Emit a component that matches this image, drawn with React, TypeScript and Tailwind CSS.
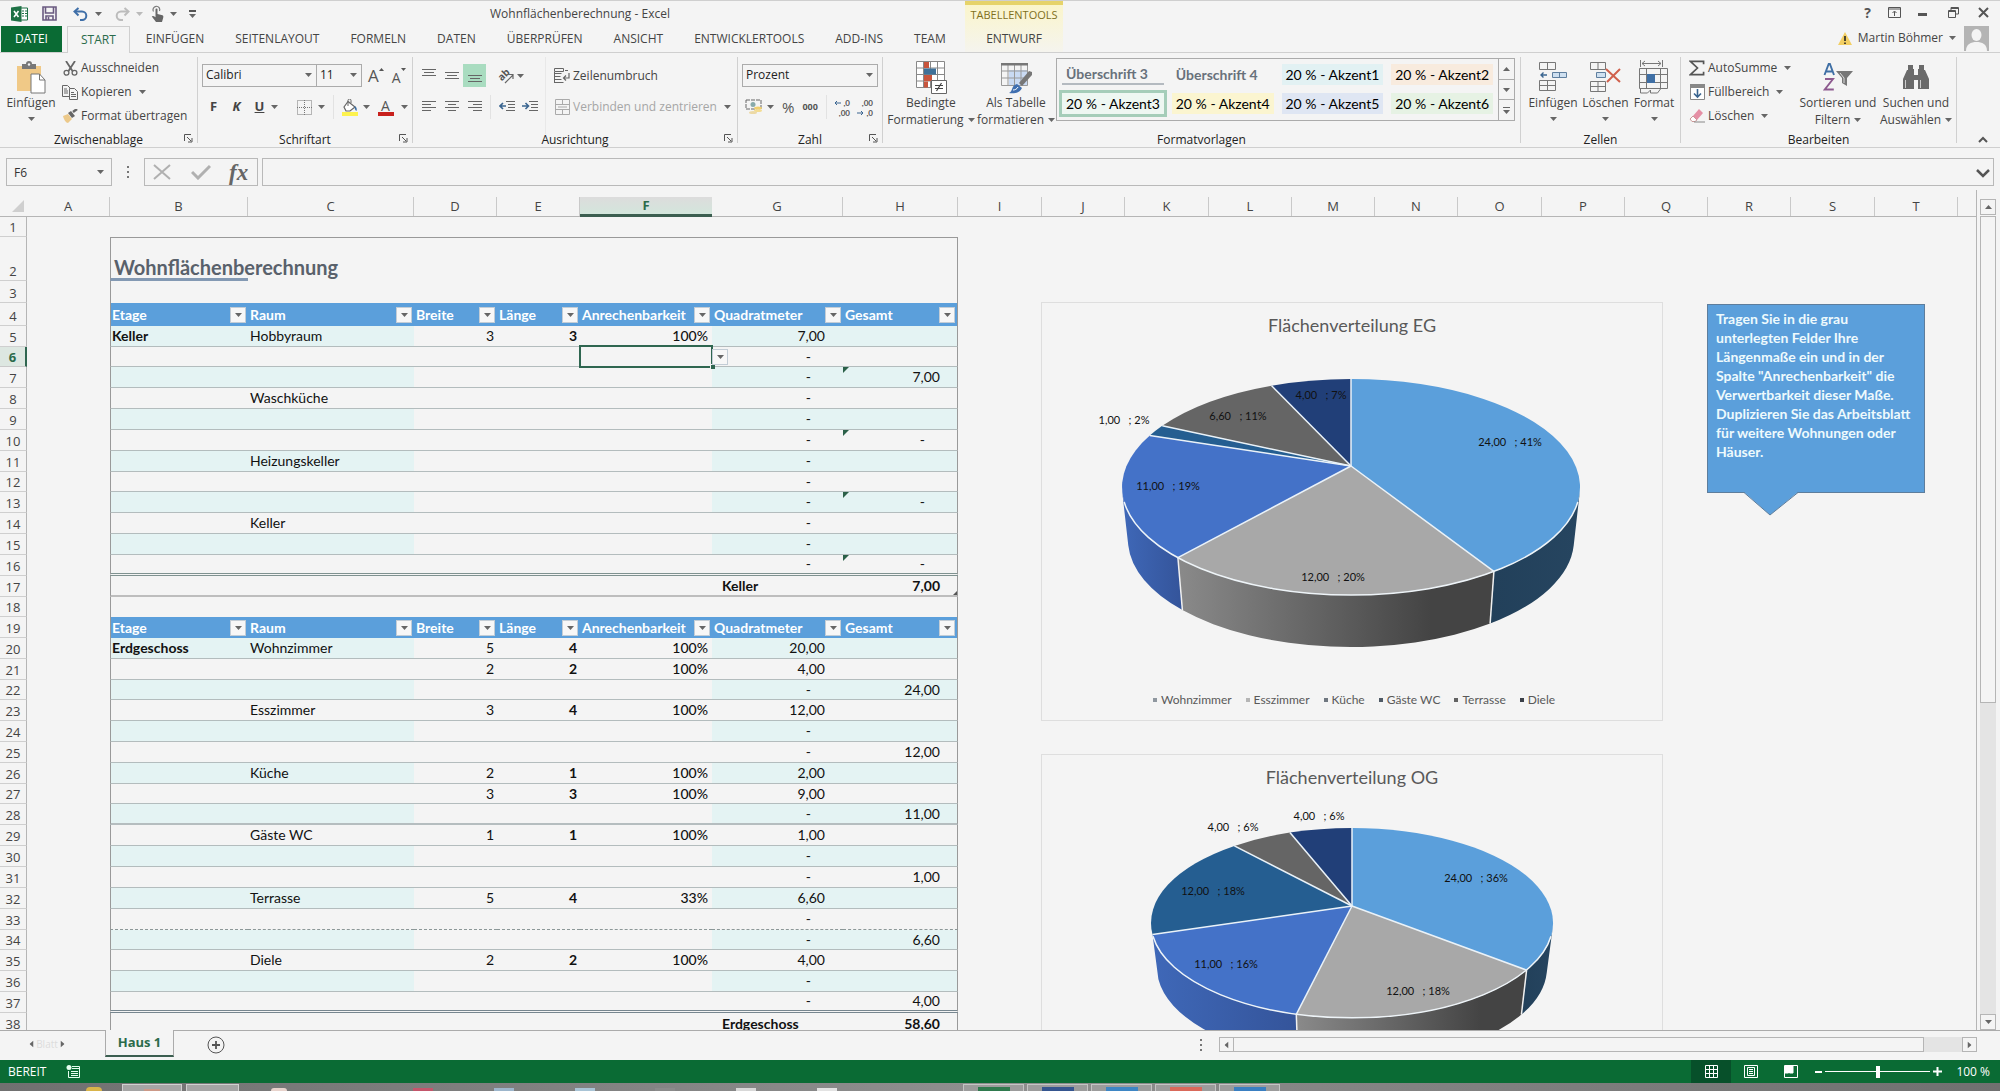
import React from "react";
import type { ReactNode } from "react";

const UI = "font-['Open_Sans','Liberation_Sans',sans-serif]";
const CELL = "font-['Lato','Liberation_Sans',sans-serif]";

/* ---------- small shared pieces ---------- */

function Caret({ className = "" }: { className?: string }) {
  return (
    <svg viewBox="0 0 7 4" className={`h-1 w-[7px] shrink-0 fill-[#666] ${className}`} aria-hidden="true">
      <path d="M0 0h7L3.5 4z" />
    </svg>
  );
}

function Launcher({ label }: { label: string }) {
  return (
    <button type="button" aria-label={label} className="absolute right-1 top-0">
      <svg viewBox="0 0 9 9" className="size-[9px] fill-none stroke-[#555]" aria-hidden="true">
        <path d="M.5 7V.5H7M3 3l4 4M8 4v4H4" />
      </svg>
    </button>
  );
}

function Group({ title, width, launcher = true, children }: { title: string; width: string; launcher?: boolean; children: ReactNode }) {
  return (
    <section aria-label={title} className={`my-1 flex shrink-0 flex-col border-r border-[#d0d0d0] ${width}`}>
      <div className="flex h-[77px] shrink-0">{children}</div>
      <div className="relative h-[11px] text-center text-[12px] leading-[11px] text-[#222]">
        {title}
        {launcher && <Launcher label={`${title} – Optionen`} />}
      </div>
    </section>
  );
}

function BigButton({ icon, lines, width }: { icon: ReactNode; lines: string[]; width: string }) {
  const two = lines.length > 1;
  return (
    <button type="button" className={`flex shrink-0 flex-col items-center whitespace-nowrap pt-[3px] text-[12px] leading-[17px] ${width}`}>
      <span className="flex h-[34px] items-center justify-center">{icon}</span>
      <span>{lines[0]}</span>
      {two ? (
        <span className="flex items-center gap-1">
          {lines[1]}
          <Caret />
        </span>
      ) : (
        <Caret className="mt-1.5" />
      )}
    </button>
  );
}

function SmallButton({ icon, label, caret = false }: { icon: ReactNode; label: string; caret?: boolean }) {
  return (
    <button type="button" className="flex h-6 items-center gap-[3px] whitespace-nowrap text-[12px]">
      <span className="flex w-4 justify-center">{icon}</span>
      <span>{label}</span>
      {caret && <Caret className="ml-1" />}
    </button>
  );
}

function Divider() {
  return <span className="block h-6 w-px shrink-0 bg-[#e2e2e2]" />;
}

/* ---------- icons ---------- */

const ExcelLogo = () => (
  <svg viewBox="0 0 17 16" className="h-4 w-[17px]" aria-hidden="true">
    <path d="M10 2h6.5v12H10" fill="#fff" stroke="#1e7145" />
    <path d="M11 5h2M14 5h2M11 7.500h2M14 7.500h2M11 10h2M14 10h2" stroke="#1e7145" strokeWidth="1.200" />
    <path d="M0 1.600 10.500 0v16L0 14.400z" fill="#1e7145" />
    <path d="m3 5 4.500 6M7.500 5 3 11" stroke="#fff" strokeWidth="1.600" />
  </svg>
);

const SaveIcon = () => (
  <svg viewBox="0 0 15 15" className="size-[15px]" fill="none" stroke="#6a5a80" strokeWidth="1.600" aria-hidden="true">
    <path d="M1 1h13v13H1z" />
    <path d="M3.500 1v6h8V1M4 14v-4h7v4M6.500 11v3" />
  </svg>
);

const UndoIcon = ({ flip = false }: { flip?: boolean }) => (
  <svg viewBox="0 0 16 14" className={`h-[14px] w-4 ${flip ? "-scale-x-100 stroke-[#bcbcbc]" : "stroke-[#3f6fa8]"}`} fill="none" strokeWidth="2" aria-hidden="true">
    <path d="M5.500 1 1.500 4.500l4 4" />
    <path d="M2 4.500h7a4.300 4.300 0 0 1 0 8.600H7" />
  </svg>
);

const TouchIcon = () => (
  <svg viewBox="0 0 13 17" className="h-[17px] w-[13px]" aria-hidden="true">
    <path d="M2.500 6.500A3.400 3.400 0 1 1 8.500 6" fill="none" stroke="#777" strokeWidth="1.200" />
    <path d="M4.500 4.500a1 1 0 0 1 2 0V9l5 1.200c1 .3 1 1.500.7 2.500L11 17H5L.8 11.600c.6-1 1.800-.8 3.700.6z" fill="#666" />
  </svg>
);

const PasteIcon = () => (
  <svg viewBox="0 0 30 33" className="h-[33px] w-[30px]" aria-hidden="true">
    <path d="M1 5h24v25H1z" fill="#f0c987" />
    <path d="M6 3h4a3 3 0 0 1 6 0h4v5H6z" fill="#777" />
    <circle cx="13" cy="3.500" r="1.200" fill="#f4f4f4" />
    <path d="M15 13h8.500l5.500 6v13H15z" fill="#fff" stroke="#777" />
    <path d="M23.500 13v6H29" fill="none" stroke="#777" />
  </svg>
);

const ScissorsIcon = () => (
  <svg viewBox="0 0 15 15" className="size-[15px]" fill="none" stroke="#666" strokeWidth="1.300" aria-hidden="true">
    <path d="m3 0 6.500 10M12 0 5.500 10" strokeWidth="1.800" />
    <circle cx="3.500" cy="11.800" r="2.400" />
    <circle cx="11.500" cy="11.800" r="2.400" />
  </svg>
);

const CopyIcon = () => (
  <svg viewBox="0 0 16 15" className="h-[15px] w-4" fill="#f4f4f4" stroke="#666" aria-hidden="true">
    <path d="M.5.5h5l3 3v8h-8z" />
    <path d="M2 4h3M2 6h4M2 8h4" />
    <path d="M7.500 3.500h5l3 3v8h-8z" />
    <path d="M9 7.500h3M9 9.500h5M9 11.500h5" />
  </svg>
);

const BrushIcon = () => (
  <svg viewBox="0 0 16 14" className="h-[14px] w-4" aria-hidden="true">
    <path d="M1 7l5-2 4 5-4 4c-2 0-4-3-5-7z" fill="#ecc98a" />
    <path d="m6 4 3-2 4 5-3 2z" fill="#666" />
    <path d="m11 3 4-3" stroke="#666" strokeWidth="2.500" />
  </svg>
);

const GrowFont = ({ up }: { up: boolean }) => (
  <span className="flex items-start text-[#555]">
    <span className={up ? "text-[17px] leading-5" : "pt-1 text-[14px] leading-4"}>A</span>
    <svg viewBox="0 0 5 3" className="mt-0.5 h-[3px] w-[5px] fill-[#555]" aria-hidden="true">
      <path d={up ? "M0 3h5L2.500 0z" : "M0 0h5L2.500 3z"} />
    </svg>
  </span>
);

const BordersIcon = () => (
  <svg viewBox="0 0 15 15" className="size-[15px]" fill="none" stroke="#777" aria-hidden="true">
    <path d="M.5.5h14v14H.5zM7.500 0v15M0 7.500h15" strokeDasharray="1 1" />
  </svg>
);

const FillIcon = () => (
  <svg viewBox="0 0 18 17" className="h-[17px] w-[18px]" aria-hidden="true">
    <path d="M7 2.500 14 8l-5 4H5L3 8z" fill="#fff" stroke="#666" strokeWidth="1.200" />
    <path d="M7 7V1.500a1.500 1.500 0 0 1 3 0V4" fill="none" stroke="#666" />
    <path d="M13.500 7c2.500 1 2.500 3 2 5-1-.5-2-2-2-5z" fill="#3a6ea5" />
    <path d="M1 13h16v4H1z" fill="#fdf24e" />
  </svg>
);

const FontColorIcon = () => (
  <span className="flex w-4 flex-col items-center">
    <span className="text-[14px] leading-[13px] text-[#555]">A</span>
    <span className="h-1 w-4 bg-[#c8201c]" />
  </span>
);

const LINES: Record<string, string> = {
  top: "M0 1.500h14M2 4.500h10M0 7.500h14",
  middle: "M0 4.500h14M2 7.500h10M0 10.500h14",
  bottom: "M0 7.500h14M2 10.500h10M0 13.500h14",
  left: "M0 2.500h14M0 5.500h9M0 8.500h14M0 11.500h9",
  center: "M0 2.500h14M3 5.500h8M0 8.500h14M3 11.500h8",
  right: "M0 2.500h14M5 5.500h9M0 8.500h14M5 11.500h9",
};

const Lines = ({ kind }: { kind: string }) => (
  <svg viewBox="0 0 14 15" className="h-[15px] w-[14px] stroke-[#666]" aria-hidden="true">
    <path d={LINES[kind]} />
  </svg>
);

const IndentIcon = ({ out = false }: { out?: boolean }) => (
  <svg viewBox="0 0 16 13" className="h-[13px] w-4" fill="none" aria-hidden="true">
    <path d="M7 1.500h9M9 4.500h7M9 7.500h7M7 10.500h9" stroke="#666" />
    {out ? <path d="M7 6H1M4 3 1 6l3 3" stroke="#3a6590" strokeWidth="1.600" /> : <path d="M0 6h6M3.500 3l3 3-3 3" stroke="#3a6590" strokeWidth="1.600" />}
  </svg>
);

const OrientIcon = () => (
  <svg viewBox="0 0 22 22" className="size-[22px]" aria-hidden="true">
    <text x="9" y="13" textAnchor="middle" fontSize="10" fontWeight="700" fill="#555" transform="rotate(-45 9 10)">
      ab
    </text>
    <path d="m10 18 8-8M13.500 9.500H18V14" fill="none" stroke="#666" strokeWidth="1.200" />
  </svg>
);

const WrapIcon = () => (
  <svg viewBox="0 0 16 16" className="size-4" fill="none" stroke="#666" aria-hidden="true">
    <path d="M.5.5h9v3h-9zM.5 5.500h7M.5 8.500h6M.5 11.500h7M.5 14.500h9M.5 4v11M11 2.500h3" />
    <path d="M15 5v5h-5M12 7.500 9.500 10l2.500 2.500" strokeWidth="1.200" />
  </svg>
);

const MergeIcon = () => (
  <svg viewBox="0 0 15 16" className="h-4 w-[15px]" fill="none" stroke="#aaa" aria-hidden="true">
    <path d="M.5.5h14v15H.5zM.5 5.500h14M.5 10.500h14M7.500.5v5M7.500 10.500v5M3 8h9" />
  </svg>
);

const CurrencyIcon = () => (
  <svg viewBox="0 0 18 16" className="h-4 w-[18px]" aria-hidden="true">
    <path d="M1 1h15v9H1z" fill="none" stroke="#666" strokeDasharray="4 1" />
    <circle cx="8" cy="5.500" r="2.500" fill="#8aa" />
    <ellipse cx="13" cy="9" rx="4" ry="1.600" fill="#f0d070" />
    <ellipse cx="13" cy="11.500" rx="4" ry="1.600" fill="#f3dc93" />
    <ellipse cx="8" cy="13.500" rx="4" ry="1.600" fill="#ecd9a5" />
  </svg>
);

const DecimalIcon = ({ more }: { more: boolean }) => (
  <svg viewBox="0 0 18 21" className={`h-[21px] w-[18px] ${CELL}`} fontSize="8" fontWeight="700" fill="#555" aria-hidden="true">
    <text x="17" y="9" textAnchor="end">{more ? ",0" : ",00"}</text>
    <text x="17" y="19" textAnchor="end">{more ? ",00" : ",0"}</text>
    <path d={more ? "M8 6H2M4 4 2 6l2 2" : "M1 16h6M5 14l2 2-2 2"} fill="none" stroke="#3a6590" />
  </svg>
);

const CondFormatIcon = () => (
  <svg viewBox="0 0 31 33" className="h-[33px] w-[31px]" aria-hidden="true">
    <path d="M.5.5h28v26H.5zM.5 7h28M.5 13.500h28M.5 20h28M7.500.5v26M14.500.5v26M21.500.5v26" fill="#fff" stroke="#888" />
    <path d="M8 1h5v6H8zM8 14h8v6H8z" fill="#c8553d" />
    <path d="M8 7.500h12v6H8z" fill="#3f7199" />
    <path d="M8 20.500h4v6H8z" fill="#c8553d" />
    <path d="M15.500 19.500h15v13h-15z" fill="#fff" stroke="#666" />
    <path d="M19 24.500h8M19 27.500h8M25.500 22l-5 8" stroke="#444" strokeWidth="1.200" />
  </svg>
);

const TableFormatIcon = () => (
  <svg viewBox="0 0 31 33" className="h-[33px] w-[31px]" aria-hidden="true">
    <path d="M8 9h18v15H8z" fill="#c9daf3" />
    <path d="M.5 3.500h26v21H.5zM.5 10h26M.5 17h26M7 3v21M13.500 3v21M20 3v21" fill="none" stroke="#999" />
    <path d="M0 2h27v2.500H0z" fill="#777" />
    <path d="m18 22 10-12 3 1v3L21 25z" fill="#777" />
    <path d="M8 32c4-1 2-8 8-9l5 4c-2 5-8 6-13 5z" fill="#3f6fb0" />
    <path d="M12 29c2 0 4-1 5-3" stroke="#fff" fill="none" />
  </svg>
);

const InsertCellsIcon = () => (
  <svg viewBox="0 0 28 30" className="h-[30px] w-7" fill="none" stroke="#777" aria-hidden="true">
    <path d="M.5.5h16v7H.5zM8.500.5v7M.5 18.500h16v10H.5zM8.500 18.500v10M.5 23.500h16" />
    <path d="M13.500 10.500h14v5h-14zM20.500 10.500v5" fill="#cfe0f0" stroke="#5f7f9f" />
    <path d="M8 13H2M4.500 10.500 2 13l2.500 2.500" stroke="#3a6590" strokeWidth="1.400" />
  </svg>
);

const DeleteCellsIcon = () => (
  <svg viewBox="0 0 31 31" className="h-[31px] w-[31px]" fill="none" stroke="#777" aria-hidden="true">
    <path d="M.5.5h15v7H.5zM8 .5v7M.5 19.500h15v10H.5zM8 19.500v10M.5 24.500h15" />
    <path d="M6.500 10.500h9v5h-9z" fill="#cfe0f0" stroke="#5f7f9f" />
    <path d="m16 7 14 13M30 7 17 20" stroke="#d0604c" strokeWidth="2" />
  </svg>
);

const FormatCellsIcon = () => (
  <svg viewBox="0 0 30 34" className="h-[34px] w-[30px]" fill="none" stroke="#777" aria-hidden="true">
    <path d="M1.500 0v7M23.500 0v7M3 3.500h19M6 1 3 3.500 6 6M19 1l3 2.500L19 6" />
    <path d="M.5 8.500h28v20H.5zM7.500 8.500v20M21.500 8.500v20M.5 14.500h28M.5 22.500h28" />
    <path d="M8 14h8v9H8z" fill="#3f6fa5" stroke="none" />
    <path d="M1.500 29v4h7l3-3v3h7l3-4" />
  </svg>
);

const SigmaIcon = () => (
  <svg viewBox="0 0 17 16" className="h-4 w-[17px]" fill="none" stroke="#555" strokeWidth="1.800" aria-hidden="true">
    <path d="M15.500 4V1H1.500L9 8l-7.500 7h14v-3" />
  </svg>
);

const FillDownIcon = () => (
  <svg viewBox="0 0 15 16" className="h-4 w-[15px]" fill="none" aria-hidden="true">
    <path d="M.5.5h14v15H.5z" fill="#fff" stroke="#888" />
    <path d="M0 0h15v4H0z" fill="#888" />
    <path d="M7.500 5v8M4 9.500l3.500 3.500L11 9.500" stroke="#3a6590" strokeWidth="1.600" />
  </svg>
);

const EraserIcon = () => (
  <svg viewBox="0 0 16 14" className="h-[14px] w-4" aria-hidden="true">
    <path d="m4 7 6-7 4 4-6 7z" fill="#e58fa5" />
    <path d="m4 7 4 4-2 1.500H3L1 10z" fill="#fff" stroke="#c99" />
    <path d="M5 13h11" stroke="#888" />
  </svg>
);

const SortIcon = () => (
  <svg viewBox="0 0 31 29" className="h-[29px] w-[31px]" aria-hidden="true">
    <path d="m1.500 12 4.200-11h1.200L11 12M3 8.500h6.500" fill="none" stroke="#3f6fa5" strokeWidth="1.900" />
    <path d="M2 16h8L1.800 26.500h9" fill="none" stroke="#8d5a8f" strokeWidth="1.900" />
    <path d="M13 8h17l-6 7v8l-5-3v-5z" fill="#777" />
    <path d="m17 10 4 5v5" stroke="#ddd" fill="none" />
  </svg>
);

const BinocularsIcon = () => (
  <svg viewBox="0 0 28 26" className="h-[26px] w-7 fill-[#6a6a6a]" aria-hidden="true">
    <path d="M6 1h5v4h1v20H1V15l4-9h1zM17 1h5v5h1l4 9v10H16V5h1zM11 11h6v5h-6z" />
    <path d="M3.500 16v8M18.500 16v8" stroke="#ccc" />
  </svg>
);

/* ---------- title bar, tabs ---------- */

const TABS = ["EINFÜGEN", "SEITENLAYOUT", "FORMELN", "DATEN", "ÜBERPRÜFEN", "ANSICHT", "ENTWICKLERTOOLS", "ADD-INS", "TEAM"];

function Header() {
  return (
    <header className="flex h-[52px] shrink-0 border-t border-[#cfcfcf]">
      <div className="flex w-[965px] shrink-0 flex-col">
        <div className="flex h-[25px] items-center">
          <div className="flex w-[490px] items-center pl-[11px]">
            <ExcelLogo />
            <button type="button" aria-label="Speichern" className="ml-[14px]"><SaveIcon /></button>
            <button type="button" aria-label="Rückgängig" className="ml-4 flex items-center gap-1.5"><UndoIcon /><Caret /></button>
            <button type="button" aria-label="Wiederholen" className="ml-3 flex items-center gap-1.5"><UndoIcon flip /><Caret className="opacity-40" /></button>
            <button type="button" aria-label="Fingereingabe" className="ml-2 flex items-center gap-1.5"><TouchIcon /><Caret /></button>
            <button type="button" aria-label="Symbolleiste anpassen" className="ml-3 flex flex-col items-center gap-0.5">
              <span className="h-0.5 w-[7px] bg-[#555]" />
              <Caret />
            </button>
          </div>
          <h1 className="text-[12px] text-[#444]">Wohnflächenberechnung - Excel</h1>
        </div>
        <nav className="flex flex-1 items-stretch gap-px text-[12px] text-[#444]">
          <button type="button" className="ml-px w-[61px] bg-[#0a6b34] text-white">DATEI</button>
          <button type="button" className="relative z-10 -mb-px ml-1 border border-b-0 border-[#cfcfcf] bg-[#f4f4f4] px-[13px] text-[#2b6b4b]">START</button>
          {TABS.map((t) => (
            <button type="button" key={t} className="px-[15px]">{t}</button>
          ))}
        </nav>
      </div>
      <div className="flex w-[98px] shrink-0 flex-col bg-gradient-to-b from-[#fbf5c8] to-[#f5f4ee] text-[12px]">
        <div className="flex h-[25px] items-center justify-center border-t-4 border-[#e6d36a] text-[11px] text-[#7f6f1c]">TABELLENTOOLS</div>
        <button type="button" className="flex-1 text-[#444]">ENTWURF</button>
      </div>
      <div className="flex flex-1 flex-col items-end">
        <div className="flex h-[23px] items-center gap-[17px] pr-[11px]">
          <button type="button" className="text-[14px] font-bold leading-none text-[#555]">?</button>
          <button type="button" aria-label="Menüband-Anzeigeoptionen">
            <svg viewBox="0 0 13 11" className="h-[11px] w-[13px]" fill="none" stroke="#555"><path d="M.5.5h12v10H.5zM0 2h13M6.500 9V4.500M4.500 6l2-2 2 2" /></svg>
          </button>
          <button type="button" aria-label="Minimieren" className="mt-1 h-[3px] w-[9px] bg-[#555]" />
          <button type="button" aria-label="Verkleinern" className="ml-1">
            <svg viewBox="0 0 11 11" className="size-[11px]" fill="none" stroke="#555"><path d="M3 3V.5h7.500V7H8M.5 3.500h7v7h-7zM.5 4.500h7M3 1.500h7" /></svg>
          </button>
          <button type="button" aria-label="Schließen" className="ml-0.5">
            <svg viewBox="0 0 11 11" className="size-[11px]" stroke="#555" strokeWidth="2"><path d="m1 1 9 9M10 1l-9 9" /></svg>
          </button>
        </div>
        <div className="flex flex-1 items-center pr-[11px]">
          <svg viewBox="0 0 14 13" className="h-[13px] w-[14px]" aria-hidden="true">
            <path d="M7 0 14 13H0z" fill="#f3cf63" />
            <path d="M7 4v5M7 10.500V12" stroke="#222" strokeWidth="1.600" />
          </svg>
          <button type="button" className="ml-1.5 flex items-center gap-1.5 text-[12px] text-[#444]">Martin Böhmer<Caret /></button>
          <svg viewBox="0 0 25 25" className="ml-2 size-[25px]" aria-hidden="true">
            <path d="M0 0h25v25H0z" fill="#b4b4b4" />
            <ellipse cx="12.500" cy="9" rx="5" ry="6" fill="#f4f4f4" />
            <path d="M2 25c0-7 5-9 10.500-9S23 18 23 25z" fill="#f4f4f4" />
          </svg>
        </div>
      </div>
    </header>
  );
}

/* ---------- ribbon ---------- */

const STYLES = [
  { name: "Überschrift 3", cls: "border-b-2 border-[#b4bac0] font-bold text-[#68717b]" },
  { name: "Überschrift 4", cls: "font-bold text-[#68717b]" },
  { name: "20 % - Akzent1", cls: "bg-[#e2f1f3] text-black" },
  { name: "20 % - Akzent2", cls: "bg-[#f8ebde] text-black" },
  { name: "20 % - Akzent3", cls: "bg-[#eef7f2] text-black outline-[3px] outline-[#a5cdb9]" },
  { name: "20 % - Akzent4", cls: "bg-[#fbf5d0] text-black" },
  { name: "20 % - Akzent5", cls: "bg-[#dfe6f3] text-black" },
  { name: "20 % - Akzent6", cls: "bg-[#e6f2e4] text-black" },
];

function IconButton({ label, children, className = "" }: { label: string; children: ReactNode; className?: string }) {
  return (
    <button type="button" aria-label={label} className={`flex h-[23px] w-[23px] shrink-0 items-center justify-center ${className}`}>
      {children}
    </button>
  );
}

function Select({ label, value, width }: { label: string; value: string; width: string }) {
  return (
    <div className={`relative h-[23px] border border-[#ababab] ${width}`}>
      <select aria-label={label} defaultValue={value} className="block h-[21px] w-full appearance-none bg-transparent pb-0.5 pl-[3px] text-[12px] leading-[19px] text-[#222]">
        <option>{value}</option>
      </select>
      <Caret className="pointer-events-none absolute right-1 top-2" />
    </div>
  );
}

function Ribbon() {
  return (
    <div className="flex h-24 shrink-0 border-y border-[#cfcfcf] text-[#444]">
      <Group title="Zwischenablage" width="w-[198px]">
        <BigButton icon={<PasteIcon />} lines={["Einfügen"]} width="w-[62px]" />
        <div className="-mt-px flex flex-col">
          <SmallButton icon={<ScissorsIcon />} label="Ausschneiden" />
          <SmallButton icon={<CopyIcon />} label="Kopieren" caret />
          <SmallButton icon={<BrushIcon />} label="Format übertragen" />
        </div>
      </Group>

      <Group title="Schriftart" width="w-[215px]">
        <div className="flex w-full flex-col gap-2 pl-1 pt-[7px]">
          <div className="flex items-center">
            <Select label="Schriftart" value="Calibri" width="w-[115px]" />
            <Select label="Schriftgrad" value="11" width="-ml-px w-[46px]" />
            <button type="button" aria-label="Schriftgrad vergrößern" className="ml-1.5"><GrowFont up /></button>
            <button type="button" aria-label="Schriftgrad verkleinern" className="ml-2"><GrowFont up={false} /></button>
          </div>
          <div className="flex items-center text-[13px]">
            <IconButton label="Fett"><b>F</b></IconButton>
            <IconButton label="Kursiv"><b className="italic">K</b></IconButton>
            <IconButton label="Unterstrichen"><b className="underline">U</b></IconButton>
            <Caret />
            <span className="w-[15px]" />
            <IconButton label="Rahmen"><BordersIcon /></IconButton>
            <Caret className="ml-0.5" />
            <span className="w-2" />
            <Divider />
            <IconButton label="Füllfarbe" className="ml-1"><FillIcon /></IconButton>
            <Caret className="ml-0.5" />
            <IconButton label="Schriftfarbe" className="ml-1"><FontColorIcon /></IconButton>
            <Caret className="ml-1" />
          </div>
        </div>
      </Group>

      <Group title="Ausrichtung" width="w-[325px]">
        <div className="flex flex-col gap-2 pl-1 pt-[7px]">
          <div className="flex">
            <IconButton label="Oben ausrichten"><Lines kind="top" /></IconButton>
            <IconButton label="Zentriert ausrichten"><Lines kind="middle" /></IconButton>
            <IconButton label="Unten ausrichten" className="bg-[#a9dcc0]"><Lines kind="bottom" /></IconButton>
            <IconButton label="Ausrichtung" className="ml-2"><OrientIcon /></IconButton>
            <Caret className="mt-2.5" />
          </div>
          <div className="flex">
            <IconButton label="Linksbündig"><Lines kind="left" /></IconButton>
            <IconButton label="Zentriert"><Lines kind="center" /></IconButton>
            <IconButton label="Rechtsbündig"><Lines kind="right" /></IconButton>
            <span className="ml-1"><Divider /></span>
            <IconButton label="Einzug verkleinern" className="ml-1"><IndentIcon out /></IconButton>
            <IconButton label="Einzug vergrößern"><IndentIcon /></IconButton>
          </div>
        </div>
        <div className="ml-1 flex flex-col gap-[7px] border-l border-[#e8e8e8] pl-2 pt-[7px]">
          <SmallButton icon={<WrapIcon />} label="Zeilenumbruch" />
          <div className="text-[#a6a6a6]"><SmallButton icon={<MergeIcon />} label="Verbinden und zentrieren" caret /></div>
        </div>
      </Group>

      <Group title="Zahl" width="w-[145px]">
        <div className="flex flex-col gap-2 pl-1 pt-[7px]">
          <Select label="Zahlenformat" value="Prozent" width="w-[136px]" />
          <div className="flex items-center text-[#555]">
            <IconButton label="Buchhaltungszahlenformat"><CurrencyIcon /></IconButton>
            <Caret className="ml-0.5" />
            <button type="button" className="ml-2 text-[15px] leading-5">%</button>
            <button type="button" className="ml-2 text-[9px] font-bold">000</button>
            <span className="ml-2"><Divider /></span>
            <IconButton label="Dezimalstelle hinzufügen" className="ml-1"><DecimalIcon more /></IconButton>
            <IconButton label="Dezimalstelle löschen"><DecimalIcon more={false} /></IconButton>
          </div>
        </div>
      </Group>

      <Group title="Formatvorlagen" width="w-[638px]" launcher={false}>
        <BigButton icon={<CondFormatIcon />} lines={["Bedingte", "Formatierung"]} width="w-24" />
        <BigButton icon={<TableFormatIcon />} lines={["Als Tabelle", "formatieren"]} width="w-[74px]" />
        <div className="ml-[3px] mt-px flex h-[63px] border border-[#ababab]">
          <div className="grid w-[441px] grid-cols-4 content-start gap-x-2 gap-y-2 px-[5px] pt-[5px]">
            {STYLES.map((s) => (
              <button type="button" key={s.name} className={`h-[21px] whitespace-nowrap pl-1 text-left text-[14px] leading-[18px] ${CELL} ${s.cls}`}>
                {s.name}
              </button>
            ))}
          </div>
          <div className="flex w-4 flex-col border-l border-[#ababab]">
            <button type="button" aria-label="Nach oben" className="flex flex-1 items-center justify-center border-b border-[#ababab]"><Caret className="rotate-180" /></button>
            <button type="button" aria-label="Nach unten" className="flex flex-1 items-center justify-center border-b border-[#ababab]"><Caret /></button>
            <button type="button" aria-label="Mehr" className="flex flex-1 flex-col items-center justify-center gap-0.5">
              <span className="h-px w-[7px] bg-[#666]" />
              <Caret />
            </button>
          </div>
        </div>
      </Group>

      <Group title="Zellen" width="w-[160px]" launcher={false}>
        <div className="flex w-full pl-[5px]">
          <BigButton icon={<InsertCellsIcon />} lines={["Einfügen"]} width="w-[54px]" />
          <BigButton icon={<DeleteCellsIcon />} lines={["Löschen"]} width="w-[51px]" />
          <BigButton icon={<FormatCellsIcon />} lines={["Format"]} width="w-[46px]" />
        </div>
      </Group>

      <Group title="Bearbeiten" width="w-[276px]" launcher={false}>
        <div className="-mt-px flex w-[115px] flex-col pl-2">
          <SmallButton icon={<SigmaIcon />} label="AutoSumme" caret />
          <SmallButton icon={<FillDownIcon />} label="Füllbereich" caret />
          <SmallButton icon={<EraserIcon />} label="Löschen" caret />
        </div>
        <BigButton icon={<SortIcon />} lines={["Sortieren und", "Filtern"]} width="w-[84px]" />
        <BigButton icon={<BinocularsIcon />} lines={["Suchen und", "Auswählen"]} width="w-[72px]" />
      </Group>

      <div className="flex flex-1 items-end justify-end pb-1 pr-3">
        <button type="button" aria-label="Menüband reduzieren">
          <svg viewBox="0 0 10 7" className="h-[7px] w-2.5" fill="none" stroke="#555" strokeWidth="2"><path d="m1 6 4-4 4 4" /></svg>
        </button>
      </div>
    </div>
  );
}

function FormulaBar() {
  return (
    <div className="flex h-[42px] shrink-0 items-center pl-1.5 pr-1.5 pt-1.5">
      <div className="relative h-7 w-[106px] border border-[#b9b9b9]">
        <input aria-label="Namenfeld" defaultValue="F6" className="h-full w-full bg-transparent pl-[7px] text-[12px] text-[#333]" />
        <Caret className="pointer-events-none absolute right-[7px] top-[11px]" />
      </div>
      <span className="flex w-8 flex-col items-center gap-[3px]">
        <i className="size-0.5 bg-[#777]" />
        <i className="size-0.5 bg-[#777]" />
        <i className="size-0.5 bg-[#777]" />
      </span>
      <div className="flex h-7 w-[114px] items-center border border-[#b9b9b9] pl-2">
        <button type="button" aria-label="Abbrechen">
          <svg viewBox="0 0 18 16" className="h-4 w-[18px]" stroke="#b0b0b0" strokeWidth="2"><path d="m1 1 16 14M17 1 1 15" /></svg>
        </button>
        <button type="button" aria-label="Eingeben" className="ml-5">
          <svg viewBox="0 0 20 16" className="h-4 w-5" fill="none" stroke="#b0b0b0" strokeWidth="3"><path d="m1 8 6 6L19 2" /></svg>
        </button>
        <button type="button" aria-label="Funktion einfügen" className="ml-[18px] font-['Liberation_Serif',serif] text-[23px] font-bold italic leading-none text-[#666]">fx</button>
      </div>
      <div className="relative ml-1 h-7 flex-1 border border-[#b9b9b9]">
        <input aria-label="Bearbeitungsleiste" className="h-full w-full bg-transparent px-2 text-[12px]" />
        <svg viewBox="0 0 14 9" className="absolute right-[3px] top-2.5 h-[9px] w-[14px]" fill="none" stroke="#555" strokeWidth="2.500" aria-hidden="true"><path d="m1 1 6 6 6-6" /></svg>
      </div>
    </div>
  );
}

/* ---------- sheet ---------- */

const COLS: { id: string; w: string }[] = [
  { id: "A", w: "w-[83px]" },
  { id: "B", w: "w-[138px]" },
  { id: "C", w: "w-[166px]" },
  { id: "D", w: "w-[83px]" },
  { id: "E", w: "w-[83px]" },
  { id: "F", w: "w-[132px]" },
  { id: "G", w: "w-[131px]" },
  { id: "H", w: "w-[115px]" },
  ..."IJKLMNOPQRST".split("").map((id) => ({ id, w: "IKOS".includes(id) ? "w-[84px]" : "w-[83px]" })),
];

type Row = { kind: "head" | "data" | "total" | "blank" | "title"; c?: Record<string, string>; band?: boolean; h?: string; line?: string; mark?: boolean };

const THIN = "border-b border-b-[#b3bcbd]";
const D = (c: Record<string, string> = {}, band = false, extra: Partial<Row> = {}): Row => ({ kind: "data", c, band, ...extra });
const SHORT = { h: "h-5" };

const ROWS: Row[] = [
  { kind: "blank", h: "h-5", line: "" },
  { kind: "title", h: "h-[44px]", line: "" },
  { kind: "blank", h: "h-[22px]", line: "" },
  { kind: "head", h: "h-[23px]" },
  D({ B: "Keller", C: "Hobbyraum", D: "3", E: "3", F: "100%", G: "7,00" }, true),
  D({ G: "-" }, false, SHORT),
  D({ G: "-", H: "7,00" }, true, { mark: true }),
  D({ C: "Waschküche", G: "-" }),
  D({ G: "-" }, true),
  D({ G: "-", H: "-" }, false, { mark: true }),
  D({ C: "Heizungskeller", G: "-" }, true),
  D({ G: "-" }, false, SHORT),
  D({ G: "-", H: "-" }, true, { mark: true }),
  D({ C: "Keller", G: "-" }),
  D({ G: "-" }, true),
  D({ G: "-", H: "-" }, false, { mark: true, line: "border-b-[3px] [border-bottom-style:double] border-b-[#7f9290]" }),
  { kind: "total", c: { G: "Keller", H: "7,00" }, line: "border-b-2 border-b-[#bdbdbd]" },
  { kind: "blank", h: "h-5", line: "" },
  { kind: "head" },
  D({ B: "Erdgeschoss", C: "Wohnzimmer", D: "5", E: "4", F: "100%", G: "20,00" }, true),
  D({ D: "2", E: "2", F: "100%", G: "4,00" }),
  D({ G: "-", H: "24,00" }, true, SHORT),
  D({ C: "Esszimmer", D: "3", E: "4", F: "100%", G: "12,00" }),
  D({ G: "-" }, true),
  D({ G: "-", H: "12,00" }),
  D({ C: "Küche", D: "2", E: "1", F: "100%", G: "2,00" }, true),
  D({ D: "3", E: "3", F: "100%", G: "9,00" }, false, SHORT),
  D({ G: "-", H: "11,00" }, true, { line: "border-b-2 border-b-[#b5bdbf]" }),
  D({ C: "Gäste WC", D: "1", E: "1", F: "100%", G: "1,00" }),
  D({ G: "-" }, true),
  D({ G: "-", H: "1,00" }),
  D({ C: "Terrasse", D: "5", E: "4", F: "33%", G: "6,60" }, true),
  D({ G: "-" }, false, { line: "border-b [border-bottom-style:dashed] border-b-[#8c9898]" }),
  D({ G: "-", H: "6,60" }, true, SHORT),
  D({ C: "Diele", D: "2", E: "2", F: "100%", G: "4,00" }),
  D({ G: "-" }, true),
  D({ G: "-", H: "4,00" }, false, { line: "border-b-[3px] [border-bottom-style:double] border-b-[#77868f]" }),
  { kind: "total", c: { G: "Erdgeschoss", H: "58,60" }, line: "" },
];

const HEADS: Record<string, string> = { B: "Etage", C: "Raum", D: "Breite", E: "Länge", F: "Anrechenbarkeit", G: "Quadratmeter", H: "Gesamt" };

const ALIGN: Record<string, string> = {
  B: "pl-px text-left font-bold",
  C: "pl-0.5 text-left",
  D: "pr-[3px] text-right",
  E: "pr-[3px] text-right font-bold",
  F: "pr-1 text-right font-medium",
  G: "pr-[18px] text-right",
  H: "pr-[17px] text-right",
};

function DropArrow({ label, className = "" }: { label: string; className?: string }) {
  return (
    <button type="button" aria-label={label} className={`flex size-4 shrink-0 items-center justify-center border border-[#c3cdd6] bg-[#f7f7f7] ${className}`}>
      <Caret />
    </button>
  );
}

function SheetCell({ row, n, col }: { row: Row; n: number; col: string }) {
  const frame = (col === "B" ? "border-l border-l-[#999] " : "") + (col === "H" ? "border-r border-r-[#999] " : "");
  const top = n === 2 ? "border-t border-t-[#999] " : "";
  if (n === 1) return <td />;
  if (row.kind === "title")
    return (
      <td className={`p-0 align-bottom ${frame}${top}${col === "B" ? "border-b-[3px] border-b-[#8399b3]" : ""}`}>
        {col === "B" && <div className="w-0 whitespace-nowrap pl-[3px] text-[20px] font-bold leading-[22px] text-[#59616b]">Wohnflächenberechnung</div>}
      </td>
    );
  if (row.kind === "head")
    return (
      <th scope="col" className={`bg-[#5b9fdb] p-0 ${frame}`}>
        <div className={`flex items-center justify-between overflow-hidden pr-0.5 text-[14px] font-bold leading-5 text-white ${col === "B" ? "pl-px" : "pl-0.5"}`}>
          <span className="whitespace-nowrap">{HEADS[col]}</span>
          <DropArrow label={`${HEADS[col]} filtern`} />
        </div>
      </th>
    );
  const v = row.c?.[col] ?? "";
  const band = row.band && "BCGH".includes(col) ? "bg-[#e4f3f3] " : "";
  const line = row.line ?? THIN;
  let align = ALIGN[col];
  if (v === "-") align = "pr-8 text-right";
  if (row.kind === "total") align = col === "G" ? "pl-2.5 text-left font-bold" : "pr-[17px] text-right font-bold";
  return (
    <td className={`relative whitespace-nowrap p-0 ${band}${line} ${frame}`}>
      <div className={`h-[18px] leading-[18px] ${align}`}>{v}</div>
      {n === 6 && col === "F" && (
        <>
          <span className="absolute -bottom-0.5 -left-px -right-px -top-0.5 border-2 border-[#2f6650]" />
          <span className="absolute -bottom-[3px] -right-[3px] z-10 size-[5px] border-l border-t border-[#f4f4f4] bg-[#2f6650]" />
          <DropArrow label="Auswahl öffnen" className="absolute left-full top-0.5 z-10" />
        </>
      )}
      {row.mark && col === "H" && <span className="absolute left-0 top-0 size-[6px] bg-[#2b6048] [clip-path:polygon(0_0,100%_0,0_100%)]" />}
      {row.kind === "total" && col === "H" && <span className="absolute bottom-0 right-0 size-1 bg-[#555] [clip-path:polygon(100%_0,100%_100%,0_100%)]" />}
    </td>
  );
}

function Grid() {
  return (
    <table className={`w-full table-fixed border-separate border-spacing-0 text-[14px] text-[#111] ${CELL}`}>
      <colgroup>
        <col className="w-[27px]" />
        {COLS.map((c) => (
          <col key={c.id} className={c.w} />
        ))}
        <col />
      </colgroup>
      <thead>
        <tr className={`h-[27px] text-[13px] ${UI}`}>
          <th className="border-b border-[#b5b5b5] p-0 align-bottom">
            <svg viewBox="0 0 12 12" className="mb-1 ml-3 size-3 fill-[#cfcfcf]" aria-hidden="true"><path d="M12 0v12H0z" /></svg>
          </th>
          {COLS.map((c) => (
            <th key={c.id} scope="col" className={`p-0 pt-[7px] align-bottom font-normal ${c.id === "F" ? "border-b-[3px] border-[#3b5e50]" : "border-b border-[#b5b5b5]"}`}>
              <div className={c.id === "F" ? "bg-gradient-to-b from-[#dcdcdc] to-[#d3e6dc] font-bold leading-[17px] text-[#2b6b4b]" : "border-r border-[#c9c9c9] leading-[19px] text-[#444]"}>{c.id}</div>
            </th>
          ))}
          <th className="border-b border-[#b5b5b5] p-0" />
        </tr>
      </thead>
      <tbody>
        {ROWS.map((row, i) => {
          const n = i + 1;
          return (
            <tr key={n} className={row.h ?? "h-[21px]"}>
              <th scope="row" className={`border-b border-r p-0 align-bottom text-[13px] leading-[18px] ${UI} ${n === 6 ? "border-r-2 border-b-[#c9c9c9] border-r-[#2f6650] bg-[#dde7e1] font-bold text-[#2b6b4b]" : "border-b-[#cfcfcf] border-r-[#b5b5b5] font-normal text-[#444]"}`}>{n}</th>
              <td />
              {"BCDEFGH".split("").map((col) => (
                <SheetCell key={col} row={row} n={n} col={col} />
              ))}
              <td colSpan={13} />
            </tr>
          );
        })}
      </tbody>
    </table>
  );
}

/* ---------- charts ---------- */

type Ellipse = { cx: number; cy: number; rx: number; ry: number };
type Slice = { to: number; fill: string; side?: string; label: string; lx: number; ly: number };
type PieSpec = { id: string; title: string; top: Ellipse; base: Ellipse; apexY: number; slices: Slice[] };

const LEGEND = [
  { name: "Wohnzimmer", dot: "bg-[#8f979f]" },
  { name: "Esszimmer", dot: "bg-[#b5b5b5]" },
  { name: "Küche", dot: "bg-[#6f7780]" },
  { name: "Gäste WC", dot: "bg-[#4f5a66]" },
  { name: "Terrasse", dot: "bg-[#636363]" },
  { name: "Diele", dot: "bg-[#3a3f48]" },
];

const EG: PieSpec = {
  id: "eg",
  title: "Flächenverteilung EG",
  top: { cx: 309, cy: 184, rx: 229, ry: 108 },
  base: { cx: 309, cy: 237, rx: 223, ry: 107 },
  apexY: 163,
  slices: [
    { to: 51.4, fill: "#5b9fdb", side: "navy", label: "24,00   ; 41%", lx: 468, ly: 143 },
    { to: 139.1, fill: "#a8a8a8", side: "gray", label: "12,00   ; 20%", lx: 291, ly: 278 },
    { to: 208.5, fill: "#4472c8", side: "blue", label: "11,00   ; 19%", lx: 126, ly: 187 },
    { to: 214.5, fill: "#255e91", label: "1,00   ; 2%", lx: 82, ly: 121 },
    { to: 249.7, fill: "#656565", label: "6,60   ; 11%", lx: 196, ly: 117 },
    { to: 270, fill: "#213f78", label: "4,00   ; 7%", lx: 279, ly: 96 },
  ],
};

const OG: PieSpec = {
  id: "og",
  title: "Flächenverteilung OG",
  top: { cx: 310, cy: 168, rx: 201, ry: 95 },
  base: { cx: 310, cy: 213, rx: 195, ry: 94 },
  apexY: 151,
  slices: [
    { to: 29.7, fill: "#5b9fdb", side: "navy", label: "24,00   ; 36%", lx: 434, ly: 127 },
    { to: 106.1, fill: "#a8a8a8", side: "gray", label: "12,00   ; 18%", lx: 376, ly: 240 },
    { to: 173.1, fill: "#4472c8", side: "blue", label: "11,00   ; 16%", lx: 184, ly: 213 },
    { to: 234.2, fill: "#255e91", label: "12,00   ; 18%", lx: 171, ly: 140 },
    { to: 252, fill: "#656565", label: "4,00   ; 6%", lx: 191, ly: 76 },
    { to: 270, fill: "#213f78", label: "4,00   ; 6%", lx: 277, ly: 65 },
  ],
};

const at = (e: Ellipse, deg: number): string => {
  const t = (deg * Math.PI) / 180;
  return `${(e.cx + e.rx * Math.cos(t)).toFixed(1)} ${(e.cy + e.ry * Math.sin(t)).toFixed(1)}`;
};

function PieChart({ pie, className }: { pie: PieSpec; className: string }) {
  const { top, base, slices } = pie;
  const starts = slices.map((_, i) => (i === 0 ? -90 : slices[i - 1].to));
  return (
    <figure className={`absolute flex h-[419px] w-[622px] flex-col border border-[#dedede] bg-[#f4f4f4] text-[#595959] ${CELL} ${className}`}>
      <svg viewBox="0 0 620 385" className="absolute inset-0 h-[385px] w-[620px]" role="img" aria-label={pie.title}>
        <defs>
          <linearGradient id={`${pie.id}-gray`}>
            <stop offset="0" stopColor="#8a8a8a" />
            <stop offset=".8" stopColor="#444" />
          </linearGradient>
          <linearGradient id={`${pie.id}-blue`}>
            <stop offset="0" stopColor="#3f68b8" />
            <stop offset="1" stopColor="#34549a" />
          </linearGradient>
          <linearGradient id={`${pie.id}-navy`}>
            <stop offset="0" stopColor="#22405a" />
            <stop offset="1" stopColor="#264560" />
          </linearGradient>
        </defs>
        {slices.map((s, i) => {
          if (!s.side) return null;
          const a = Math.max(starts[i], 3);
          const b = Math.min(s.to, 177);
          return (
            <path
              key={s.side}
              fill={`url(#${pie.id}-${s.side})`}
              d={`M${at(top, a)}A${top.rx} ${top.ry} 0 0 1 ${at(top, b)}L${at(base, b)}A${base.rx} ${base.ry} 0 0 0 ${at(base, a)}Z`}
            />
          );
        })}
        {slices.slice(0, 2).map((s) => (
          <path key={s.to} d={`M${at(top, s.to)}L${at(base, s.to)}`} stroke="#f0f0f0" strokeWidth="1.500" />
        ))}
        {slices.map((s, i) => (
          <path key={s.to} fill={s.fill} d={`M${top.cx} ${pie.apexY}L${at(top, starts[i])}A${top.rx} ${top.ry} 0 0 1 ${at(top, s.to)}Z`} />
        ))}
        {slices.map((s) => (
          <path key={s.to} d={`M${top.cx} ${pie.apexY}L${at(top, s.to)}`} stroke="#eaf2f8" strokeWidth="1.500" />
        ))}
        <path d={`M${at(top, 8)}A${top.rx} ${top.ry} 0 0 1 ${at(top, 172)}`} fill="none" stroke="#eef4f8" strokeWidth="1.500" />
        {slices.map((s) => (
          <text key={s.to} x={s.lx} y={s.ly} textAnchor="middle" className="whitespace-pre fill-[#111] text-[11px]">
            {s.label}
          </text>
        ))}
      </svg>
      <figcaption className="relative pt-2.5 text-center text-[18px] leading-6">{pie.title}</figcaption>
      <ul className="relative mt-auto flex justify-center gap-3.5 pb-3 pl-1 text-[12px] leading-4">
        {LEGEND.map((l) => (
          <li key={l.name} className="flex items-center gap-1">
            <span className={`size-1 ${l.dot}`} />
            {l.name}
          </li>
        ))}
      </ul>
    </figure>
  );
}

function Callout() {
  return (
    <aside className={`absolute left-[1707px] top-[114px] h-[189px] w-[218px] border border-[#5d7d9c] bg-[#5b9fdb] pl-2 pr-1 pt-1 text-[14px] font-bold leading-[19px] text-[#eefafd] ${CELL}`}>
      Tragen Sie in die grau unterlegten Felder Ihre Längenmaße ein und in der Spalte "Anrechenbarkeit" die Verwertbarkeit dieser Maße. Duplizieren Sie das Arbeitsblatt für weitere Wohnungen oder Häuser.
      <svg viewBox="0 0 54 25" className="absolute left-9 top-[186px] h-[25px] w-[54px]" aria-hidden="true">
        <path d="M0 0h54v1L26 24 0 1z" fill="#5b9fdb" />
        <path d="M0 1.500 26 24 54 1.500" fill="none" stroke="#5d7d9c" />
      </svg>
    </aside>
  );
}

function Sheet() {
  return (
    <main className="flex min-h-0 flex-1 border-b border-[#ababab]">
      <div className="relative min-w-0 flex-1 overflow-hidden border-r border-[#b5b5b5]">
        <Grid />
        <PieChart pie={EG} className="left-[1041px] top-[112px]" />
        <PieChart pie={OG} className="left-[1041px] top-[564px]" />
        <Callout />
      </div>
      <div className="ml-[3px] mr-1 flex w-4 flex-col pt-[9px]">
        <button type="button" aria-label="Nach oben blättern" className="flex h-4 shrink-0 items-center justify-center border border-[#b5b5b5]"><Caret className="rotate-180" /></button>
        <div className="mt-px flex-1 bg-[#e4e4e4]">
          <div className="h-[61%] border border-[#b5b5b5] bg-[#f4f4f4]" />
        </div>
        <button type="button" aria-label="Nach unten blättern" className="flex h-4 shrink-0 items-center justify-center border border-[#b5b5b5]"><Caret /></button>
      </div>
    </main>
  );
}

function SheetTabs() {
  return (
    <div className="flex h-[29px] shrink-0 items-start pr-[23px]">
      <div className="flex h-[26px] w-[105px] items-center pl-[28px]">
        <button type="button" aria-label="Vorheriges Blatt"><Caret className="rotate-90" /></button>
        <span className="w-6 text-center text-[10px] text-[#dcdcdc]">Blatt</span>
        <button type="button" aria-label="Nächstes Blatt"><Caret className="-rotate-90" /></button>
      </div>
      <button type="button" className="relative -mt-px h-[27px] w-[69px] border border-b-2 border-t-0 border-[#ababab] border-b-[#3b5e50] bg-[#f4f4f4] text-[13px] font-bold text-[#2b6b4b]">Haus 1</button>
      <button type="button" aria-label="Neues Blatt" className="ml-[33px] mt-[5px]">
        <svg viewBox="0 0 18 18" className="size-[18px]" fill="none" stroke="#555"><circle cx="9" cy="9" r="8" /><path d="M9 5v8M5 9h8" strokeWidth="1.800" /></svg>
      </button>
      <span className="ml-auto mr-[17px] mt-2 flex flex-col gap-[3px]">
        <i className="size-0.5 bg-[#777]" />
        <i className="size-0.5 bg-[#777]" />
        <i className="size-0.5 bg-[#777]" />
      </span>
      <div className="mt-1.5 flex h-[15px] w-[758px] bg-[#e4e4e4]">
        <button type="button" aria-label="Nach links blättern" className="flex w-[15px] shrink-0 items-center justify-center border border-[#b5b5b5] bg-[#f4f4f4]"><Caret className="rotate-90" /></button>
        <div className="flex-1 border border-l-0 border-[#b5b5b5] bg-[#f4f4f4]" />
        <div className="w-[38px]" />
        <button type="button" aria-label="Nach rechts blättern" className="flex w-[15px] shrink-0 items-center justify-center border border-[#b5b5b5] bg-[#f4f4f4]"><Caret className="-rotate-90" /></button>
      </div>
    </div>
  );
}

function StatusBar() {
  return (
    <footer className="flex h-[23px] shrink-0 items-center bg-[#0a6b34] pl-2 pr-2.5 text-white">
      <span className="text-[12px] leading-none">BEREIT</span>
      <svg viewBox="0 0 14 13" className="ml-5 h-[13px] w-[14px]" fill="none" stroke="#e6fff0" aria-hidden="true">
        <circle cx="3" cy="2.500" r="2.500" fill="#e6fff0" stroke="none" />
        <path d="M6 1.500h7.500v11h-11V6M6 3.500h7M5 6.500h7M5 8.500h7M5 10.500h7" />
      </svg>
      <div className="ml-auto flex h-full items-center">
        <button type="button" aria-label="Normal" className="flex h-full w-10 items-center justify-center bg-[#07502a]">
          <svg viewBox="0 0 13 13" className="size-[13px]" fill="none" stroke="#fff"><path d="M.5.5h12v12H.5zM4.500 0v13M8.500 0v13M0 4.500h13M0 8.500h13" /></svg>
        </button>
        <button type="button" aria-label="Seitenlayout" className="flex w-10 items-center justify-center">
          <svg viewBox="0 0 14 13" className="h-[13px] w-[14px]" fill="none" stroke="#fff"><path d="M.5.5h13v12H.5zM3.500 2.500h7v8h-7zM5 4.500h4M5 6.500h4M5 8.500h4" /></svg>
        </button>
        <button type="button" aria-label="Umbruchvorschau" className="flex w-10 items-center justify-center">
          <svg viewBox="0 0 14 13" className="h-[13px] w-[14px]" fill="none" stroke="#fff"><path d="M.5.5h13v12H.5z" /><path d="M1 1h3.500v7H1zM5.500 1H9v7H5.500z" fill="#fff" /></svg>
        </button>
        <button type="button" aria-label="Verkleinern" className="ml-1 h-0.5 w-[7px] bg-white" />
        <input
          type="range"
          aria-label="Zoom"
          defaultValue={50}
          className="mx-[3px] h-3 w-[105px] appearance-none bg-[linear-gradient(#fff,#fff)] bg-[length:100%_1px] bg-center bg-no-repeat [&::-webkit-slider-thumb]:h-3 [&::-webkit-slider-thumb]:w-1 [&::-webkit-slider-thumb]:appearance-none [&::-webkit-slider-thumb]:bg-white"
        />
        <button type="button" aria-label="Vergrößern">
          <svg viewBox="0 0 9 9" className="size-[9px]" stroke="#fff" strokeWidth="2"><path d="M4.500 0v9M0 4.500h9" /></svg>
        </button>
        <span className="ml-3.5 text-[12px]">100 %</span>
      </div>
    </footer>
  );
}

const PINNED = ["bg-[#c3566b]", "bg-[#9db6cc]", "bg-[#a9c4d6]", "bg-[#8b8b8b]", "bg-[#d8d8d8]", "bg-[#e3e3e3]"];
const OPEN = ["bg-[#2f7a4e]", "bg-[#35558f]", "bg-[#3e86c4]", "bg-[#d9695a]", "bg-[#3a7fc1]"];

function Taskbar() {
  return (
    <div className="flex h-2 shrink-0 items-end overflow-hidden bg-gradient-to-r from-[#707070] via-[#8f8f8f] to-[#707070]">
      <span className="ml-[86px] mr-5 h-1 w-4 rounded-t-full bg-[#d9b44a]" />
      <span className="flex h-[7px] w-[60px] items-end justify-center border border-b-0 border-[#d0d0d0] bg-[#a5a5a5]"><i className="h-0.5 w-4 bg-[#c98]" /></span>
      <span className="ml-1 h-[7px] w-[53px] border border-b-0 border-[#d0d0d0] bg-[#a5a5a5]" />
      <span className="ml-8 h-[3px] w-4 rounded-t-full bg-[#e8d3cc]" />
      <div className="flex flex-1 items-end justify-around px-24">
        {PINNED.map((c) => (
          <i key={c} className={`h-[3px] w-5 ${c}`} />
        ))}
      </div>
      <div className="flex gap-[3px]">
        {OPEN.map((c) => (
          <span key={c} className="flex h-[7px] w-[61px] items-end justify-center border border-b-0 border-[#c4c4c4] bg-[#9c9c9c]">
            <i className={`h-1 w-8 ${c}`} />
          </span>
        ))}
      </div>
      <span className="w-[36%]" />
    </div>
  );
}

export default function App() {
  return (
    <div className={`flex h-screen flex-col overflow-hidden bg-[#f4f4f4] ${UI}`}>
      <Header />
      <Ribbon />
      <FormulaBar />
      <Sheet />
      <SheetTabs />
      <StatusBar />
      <Taskbar />
    </div>
  );
}
